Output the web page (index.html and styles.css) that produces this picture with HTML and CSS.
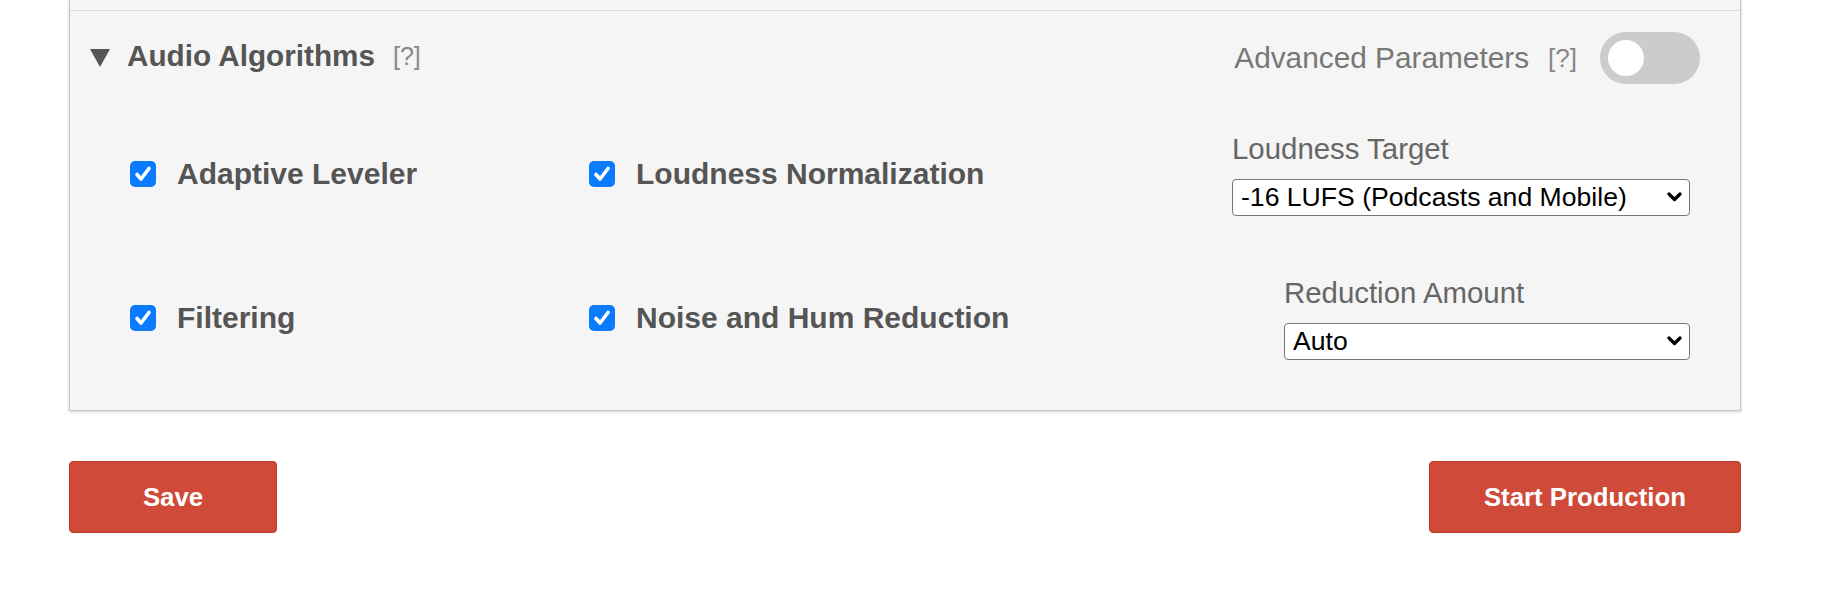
FILE: index.html
```html
<!DOCTYPE html>
<html lang="en">
<head>
<meta charset="utf-8">
<title>Audio Algorithms</title>
<link rel="stylesheet" href="styles.css">
</head>
<body>
<div class="page">
  <div class="panel">
    <section class="section">
      <div class="section-head">
        <div class="head-left">
          <span class="caret" aria-hidden="true"></span>
          <h2 class="title">Audio Algorithms</h2>
          <span class="help">[?]</span>
        </div>
        <div class="head-right">
          <span class="adv-label">Advanced Parameters</span>
          <span class="help help-right">[?]</span>
          <span class="toggle"><span class="knob"></span></span>
        </div>
      </div>
      <div class="content">
        <div class="row row-1">
          <label class="check col1">
            <span class="box"><svg viewBox="0 0 26 26" width="26" height="26"><path d="M7 13.5 L11 18 L19 7.5" fill="none" stroke="#fff" stroke-width="3.6" stroke-linecap="round" stroke-linejoin="round"/></svg></span>
            <span class="check-text">Adaptive Leveler</span>
          </label>
          <label class="check col2">
            <span class="box"><svg viewBox="0 0 26 26" width="26" height="26"><path d="M7 13.5 L11 18 L19 7.5" fill="none" stroke="#fff" stroke-width="3.6" stroke-linecap="round" stroke-linejoin="round"/></svg></span>
            <span class="check-text">Loudness Normalization</span>
          </label>
          <div class="field">
            <div class="field-label">Loudness Target</div>
            <div class="select-wrap sel-wide">
              <select class="select">
                <option>-16 LUFS (Podcasts and Mobile)</option>
              </select>
              <svg class="chev" viewBox="0 0 15 10" width="15" height="10"><path d="M2 2 L7.5 7.5 L13 2" fill="none" stroke="#000" stroke-width="3.2" stroke-linecap="round" stroke-linejoin="round"/></svg>
            </div>
          </div>
        </div>
        <div class="row row-2">
          <label class="check col1">
            <span class="box"><svg viewBox="0 0 26 26" width="26" height="26"><path d="M7 13.5 L11 18 L19 7.5" fill="none" stroke="#fff" stroke-width="3.6" stroke-linecap="round" stroke-linejoin="round"/></svg></span>
            <span class="check-text">Filtering</span>
          </label>
          <label class="check col2">
            <span class="box"><svg viewBox="0 0 26 26" width="26" height="26"><path d="M7 13.5 L11 18 L19 7.5" fill="none" stroke="#fff" stroke-width="3.6" stroke-linecap="round" stroke-linejoin="round"/></svg></span>
            <span class="check-text">Noise and Hum Reduction</span>
          </label>
          <div class="field">
            <div class="field-label">Reduction Amount</div>
            <div class="select-wrap sel-narrow">
              <select class="select">
                <option>Auto</option>
              </select>
              <svg class="chev" viewBox="0 0 15 10" width="15" height="10"><path d="M2 2 L7.5 7.5 L13 2" fill="none" stroke="#000" stroke-width="3.2" stroke-linecap="round" stroke-linejoin="round"/></svg>
            </div>
          </div>
        </div>
      </div>
    </section>
  </div>
  <div class="actions">
    <button class="btn btn-save" type="button">Save</button>
    <button class="btn btn-start" type="button">Start Production</button>
  </div>
</div>
</body>
</html>
```

FILE: styles.css
```css
html, body {
  margin: 0;
  padding: 0;
  background: #fff;
}

body {
  font-family: "Liberation Sans", Arial, Helvetica, sans-serif;
  color: #555;
}

.page {
  margin-left: 69px;
  width: 1672px;
}

.panel {
  background: #f5f5f5;
  border: 1px solid #c4c4c4;
  border-top: 0;
  box-shadow: 0 1px 3px rgba(0, 0, 0, 0.18);
  padding-top: 10px;
}

.section {
  border-top: 1px solid #dcdcdc;
}

.section-head {
  display: flex;
  justify-content: space-between;
  align-items: center;
  padding: 21px 40px 0 20px;
}

.head-left {
  display: flex;
  align-items: center;
  padding-bottom: 5px;
}

.caret {
  width: 0;
  height: 0;
  border-left: 10px solid transparent;
  border-right: 10px solid transparent;
  border-top: 18px solid #555;
  margin-top: 5px;
}

.title {
  margin: 0 0 0 17px;
  font-size: 29.7px;
  font-weight: bold;
  color: #555;
  line-height: 34px;
}

.help {
  margin-left: 18px;
  font-size: 25px;
  color: #888;
  line-height: 34px;
}

.head-right {
  display: flex;
  align-items: center;
}

.adv-label {
  font-size: 29.8px;
  color: #777;
  line-height: 34px;
}

.help-right {
  margin-left: 19px;
  font-size: 26px;
}

.toggle {
  display: block;
  margin-left: 23px;
  width: 100px;
  height: 52px;
  border-radius: 26px;
  background: #cccccc;
  position: relative;
}

.knob {
  position: absolute;
  left: 8px;
  top: 8px;
  width: 36px;
  height: 36px;
  border-radius: 50%;
  background: #fff;
}

.content {
  padding: 48px 50px 50px 60px;
  display: flex;
  flex-direction: column;
  gap: 60px;
}

.row {
  display: flex;
  align-items: center;
}

.check {
  display: flex;
  align-items: center;
}

.col1 {
  width: 459px;
}

.col2 {
  flex: 1;
}

.box {
  display: block;
  width: 26px;
  height: 26px;
  border-radius: 5px;
  background: #0b7bfe;
  flex: none;
}

.box svg {
  display: block;
}

.check-text {
  margin-left: 21px;
  font-size: 30px;
  font-weight: bold;
  color: #555;
  line-height: 34px;
}

.field {
  display: flex;
  flex-direction: column;
}

.field-label {
  font-size: 29.4px;
  color: #666;
  line-height: 34px;
  margin-bottom: 13px;
}

.select-wrap {
  position: relative;
  height: 37px;
}

.sel-wide {
  width: 458px;
}

.sel-narrow {
  width: 406px;
}

.select {
  -webkit-appearance: none;
  appearance: none;
  display: block;
  width: 100%;
  height: 37px;
  margin: 0;
  padding: 0 30px 0 8px;
  border: 1px solid #777;
  border-radius: 4px;
  background: #fff;
  color: #000;
  font-family: "Liberation Sans", Arial, Helvetica, sans-serif;
  font-size: 26.6px;
  line-height: 35px;
}

.chev {
  position: absolute;
  right: 8px;
  top: 13px;
  pointer-events: none;
}

.actions {
  display: flex;
  justify-content: space-between;
  margin-top: 50px;
}

.btn {
  height: 72px;
  min-width: 208px;
  padding: 0 54px;
  border: 1px solid #b53c2d;
  border-radius: 4px;
  background: #cf4a39;
  color: #fff;
  font-family: "Liberation Sans", Arial, Helvetica, sans-serif;
  font-size: 25.8px;
  font-weight: bold;
  cursor: pointer;
}
```
